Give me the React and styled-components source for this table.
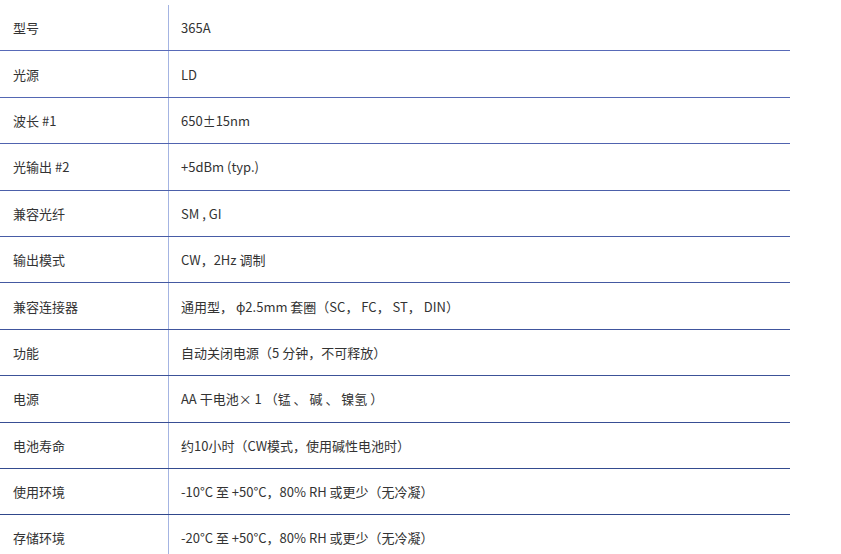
import styled, { createGlobalStyle } from "styled-components";

const GlobalStyle = createGlobalStyle`
  body {
    margin: 0;
    background: #fff;
    font-family: "Noto Sans CJK SC", "Noto Sans", sans-serif;
  }
`;

const specs = [
  ["型号", "365A"],
  ["光源", "LD"],
  ["波长 #1", "650±15nm"],
  ["光输出 #2", "+5dBm (typ.)"],
  ["兼容光纤", "SM , GI"],
  ["输出模式", "CW，2Hz 调制"],
  ["兼容连接器", "通用型， ϕ2.5mm 套圈（SC， FC， ST， DIN）"],
  ["功能", "自动关闭电源（5 分钟，不可释放）"],
  ["电源", "AA 干电池× 1 （锰 、 碱 、 镍氢 ）"],
  ["电池寿命", "约10小时（CW模式，使用碱性电池时）"],
  ["使用环境", "-10°C 至 +50°C，80% RH 或更少（无冷凝）"],
  ["存储环境", "-20°C 至 +50°C，80% RH 或更少（无冷凝）"],
];

const lineColor = (i) => {
  const t = i / (specs.length - 1);
  const from = [88, 106, 184];
  const to = [44, 68, 134];
  const c = from.map((v, k) => Math.round(v + (to[k] - v) * t));
  return `rgb(${c.join(",")})`;
};

export default function App() {
  return (
    <>
      <GlobalStyle />
      <Table>
        {specs.map(([name, value], i) => (
          <Row key={name} style={{ borderBottomColor: lineColor(i) }}>
            <Label>{name}</Label>
            <Value>{value}</Value>
          </Row>
        ))}
      </Table>
    </>
  );
}

const Table = styled.div`
  width: 790px;
  margin-top: 5px;
`;

const Row = styled.div`
  display: grid;
  grid-template-columns: 168px 1fr;
  height: 46.4px;
  box-sizing: border-box;
  border-bottom: 1.6px solid #5468b4;
`;

const Cell = styled.div`
  display: flex;
  align-items: center;
  font-size: 13px;
  color: #333;
  white-space: nowrap;
`;

const Label = styled(Cell)`
  padding-left: 13px;
`;

const Value = styled(Cell)`
  padding-left: 12px;
  border-left: 1.6px solid #a4b4e2;
`;
